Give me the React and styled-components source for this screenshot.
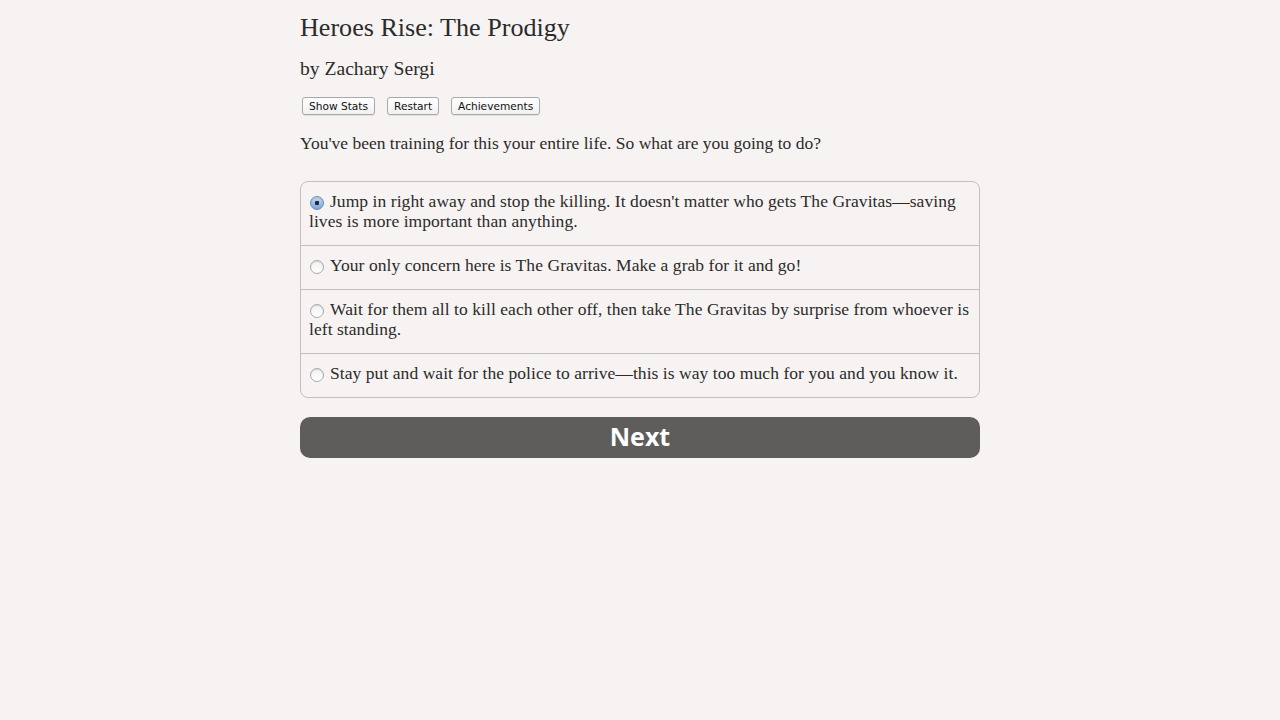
import React, { useState } from "react"
import styled, { createGlobalStyle } from "styled-components"

const GlobalStyle = createGlobalStyle`
	html, body {
		margin: 0;
		padding: 0;
		background: #f7f3f2;
	}
	body {
		font-family: "Liberation Serif", "Times New Roman", serif;
		color: #2b2b2b;
	}
`

const choices = [
	"Jump in right away and stop the killing. It doesn't matter who gets The Gravitas\u2014saving lives is more important than anything.",
	"Your only concern here is The Gravitas. Make a grab for it and go!",
	"Wait for them all to kill each other off, then take The Gravitas by surprise from whoever is left standing.",
	"Stay put and wait for the police to arrive\u2014this is way too much for you and you know it.",
]

const App = () => {
	const [selected, setSelected] = useState(0)
	return (
		<Page>
			<GlobalStyle />
			<Main>
				<Title>Heroes Rise: The Prodigy</Title>
				<Author>by Zachary Sergi</Author>
				<Toolbar>
					<SmallButton>Show Stats</SmallButton>
					<SmallButton>Restart</SmallButton>
					<SmallButton>Achievements</SmallButton>
				</Toolbar>
				<Question>
					You've been training for this your entire life. So what are you
					going to do?
				</Question>
				<ChoiceList>
					{choices.map((text, i) => (
						<Choice key={i} onClick={() => setSelected(i)}>
							<Radio checked={selected === i} />
							{text}
						</Choice>
					))}
				</ChoiceList>
				<NextButton>Next</NextButton>
			</Main>
		</Page>
	)
}

const Page = styled.div`
	min-height: 720px;
	background: #f7f3f2;
`

const Main = styled.div`
	width: 680px;
	margin: 0 auto;
	padding-top: 12px;
`

const Title = styled.h1`
	margin: 0;
	font-size: 26.1px;
	font-weight: 400;
	line-height: 32px;
	color: #2b2b2b;
`

const Author = styled.h2`
	margin: 13px 0 0;
	font-size: 19.6px;
	font-weight: 400;
	line-height: 24px;
	color: #2b2b2b;
`

const Toolbar = styled.div`
	display: flex;
	gap: 12px;
	margin: 16px 0 0 2px;
`

const SmallButton = styled.button`
	height: 18px;
	padding: 0 6px;
	font-family: "DejaVu Sans", "Liberation Sans", sans-serif;
	font-size: 10.6px;
	color: #111;
	background: linear-gradient(#ffffff, #f1f1f1);
	border: 1px solid #a9a9a9;
	border-radius: 3px;
	box-shadow: 0 1px 0 rgba(0, 0, 0, 0.08);
	line-height: 16px;
`

const Question = styled.p`
	margin: 18px 0 0;
	font-size: 17.5px;
	line-height: 20px;
	color: #2b2b2b;
`

const ChoiceList = styled.div`
	margin-top: 28px;
	border: 1px solid #c4c0bf;
	border-radius: 8px;
	overflow: hidden;
`

const Choice = styled.label`
	display: block;
	padding: 9px 8px 14px;
	font-size: 17.5px;
	line-height: 20px;
	letter-spacing: 0.06px;
	color: #2b2b2b;
	cursor: pointer;
	& + & {
		border-top: 1px solid #c4c0bf;
	}
`

const Radio = styled.span`
	display: inline-block;
	box-sizing: border-box;
	width: 14px;
	height: 14px;
	margin: 0 6px 0 1px;
	vertical-align: -3px;
	border-radius: 50%;
	border: 1px solid ${(p) => (p.checked ? "#6f8db5" : "#a8a8a8")};
	background: ${(p) =>
		p.checked
			? "radial-gradient(circle, #1d2a3a 0 2px, transparent 2.5px), linear-gradient(#c5daf3, #7aa5dc)"
			: "linear-gradient(#f2f2f2, #ffffff)"};
	box-shadow: inset 0 1px 1px rgba(0, 0, 0, 0.12);
`

const NextButton = styled.button`
	display: block;
	width: 100%;
	height: 41px;
	margin-top: 19px;
	padding: 0 0 3px;
	border: none;
	border-radius: 10px;
	background: #5f5d5c;
	color: #ffffff;
	font-family: "Open Sans", "Liberation Sans", sans-serif;
	font-size: 25px;
	font-weight: 700;
	cursor: pointer;
`

export default App
